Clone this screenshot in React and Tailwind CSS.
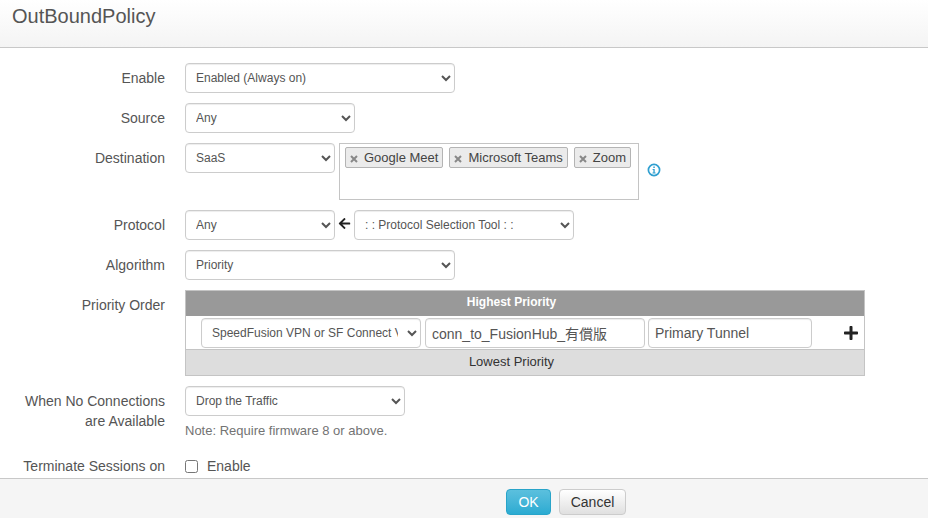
import React from "react";
import { FaPlus, FaArrowLeft } from "react-icons/fa";

const selectCls =
  "h-[30px] shrink-0 rounded-[4px] border border-[#cccccc] bg-white pl-[6px] pr-[6px] text-[12px] text-[#555555] shadow-[inset_0_1px_1px_rgba(0,0,0,0.075)] outline-none";
const inputCls =
  "h-[30px] shrink-0 rounded-[4px] border border-[#cccccc] bg-white px-[6px] text-[14px] text-[#555555] shadow-[inset_0_1px_1px_rgba(0,0,0,0.075)] outline-none";

function Select({ className, children }) {
  return (
    <select className={`${selectCls} ${className}`}>
      <option>{children}</option>
    </select>
  );
}

function Row({ label, className = "", labelClass = "", children }) {
  return (
    <div className={`flex gap-5 ${className}`}>
      <div className={`w-[165px] shrink-0 text-right text-[14px] leading-[20px] text-[#555555] ${labelClass}`}>
        {label}
      </div>
      {children}
    </div>
  );
}

function Tag({ children }) {
  return (
    <span className="flex h-[21px] shrink-0 items-center gap-[6px] whitespace-nowrap rounded-[2px] border border-[#b4b4b4] bg-[#ebebeb] pl-[4px] pr-[4px] text-[13px] leading-[19px] text-[#444444]">
      <svg width="8" height="8" viewBox="0 0 8 8" className="mt-[2px]">
        <path d="M1 1 L7 7 M7 1 L1 7" stroke="#888888" strokeWidth="2" />
      </svg>
      {children}
    </span>
  );
}

export default function App() {
  return (
    <div className="flex h-[518px] w-[928px] flex-col overflow-hidden bg-white font-['Liberation_Sans','Noto_Sans_CJK_TC',sans-serif] text-[#555555]">
      <header className="h-[48px] shrink-0 border-b border-[#c8c8c8] bg-gradient-to-b from-white to-[#f4f4f4] pl-3 pt-[3px] text-[20px] leading-[26px] text-[#555555]">
        OutBoundPolicy
      </header>

      <main className="min-h-0 flex-1 overflow-hidden pt-[15px]">
        <Row label="Enable" labelClass="pt-[5px]" className="mb-[10px]">
          <Select className="w-[270px]">Enabled (Always on)</Select>
        </Row>
        <Row label="Source" labelClass="pt-[5px]" className="mb-[10px]">
          <Select className="w-[170px]">Any</Select>
        </Row>
        <Row label="Destination" labelClass="pt-[5px]" className="mb-[10px]">
          <div className="flex">
            <Select className="w-[150px]">SaaS</Select>
            <div className="ml-[4px] flex h-[57px] w-[300px] items-start gap-[6px] border border-[#c4c4c4] bg-white pl-[5px] pt-[3px]">
              <Tag>Google Meet</Tag>
              <Tag>Microsoft Teams</Tag>
              <Tag>Zoom</Tag>
            </div>
            <svg width="14" height="14" viewBox="0 0 14 14" className="ml-[8px] mt-[20px]">
              <circle cx="7" cy="7" r="5.6" fill="none" stroke="#2f9fd0" strokeWidth="1.7" />
              <path d="M5.6 5.9 H7.7 V9.4 H8.6 V10.4 H5.5 V9.4 H6.4 V6.9 H5.6 Z" fill="#2f9fd0" />
              <rect x="6.3" y="3.5" width="1.5" height="1.5" fill="#2f9fd0" />
            </svg>
          </div>
        </Row>
        <Row label="Protocol" labelClass="pt-[5px]" className="mb-[10px]">
          <div className="flex">
            <Select className="w-[150px]">Any</Select>
            <span className="flex w-[19px] justify-center pt-[7px] text-[#222222]">
              <FaArrowLeft size={13} />
            </span>
            <Select className="w-[220px]">: : Protocol Selection Tool : :</Select>
          </div>
        </Row>
        <Row label="Algorithm" labelClass="pt-[5px]" className="mb-[10px]">
          <Select className="w-[270px]">Priority</Select>
        </Row>
        <Row label="Priority Order" labelClass="pt-[5px]" className="mb-[10px]">
          <div className="w-[680px] border border-[#c4c4c4]">
            <div className="h-[25px] bg-[#999999] pr-[27px] text-center text-[12px] font-bold leading-[22px] text-white">
              Highest Priority
            </div>
            <div className="flex h-[34px] items-center border-b border-[#c4c4c4] pl-[15px]">
              <Select className="w-[220px]">SpeedFusion VPN or SF Connect VPN</Select>
              <input readOnly value="conn_to_FusionHub_有償版" className={`${inputCls} ml-[4px] w-[220px]`} />
              <input readOnly value="Primary Tunnel" className={`${inputCls} ml-[3px] w-[164px]`} />
              <span className="ml-[31px] text-[#222222]">
                <FaPlus size={16} />
              </span>
            </div>
            <div className="h-[25px] bg-[#dddddd] pr-[27px] text-center text-[13px] leading-[24px] text-[#333333]">
              Lowest Priority
            </div>
          </div>
        </Row>
        <Row
          label={
            <>
              When No Connections
              <br />
              are Available
            </>
          }
          labelClass="pt-[5px]"
          className="mb-[17px]"
        >
          <div>
            <Select className="block w-[220px]">Drop the Traffic</Select>
            <p className="mt-[6px] text-[13px] leading-[17px] text-[#737373]">Note: Require firmware 8 or above.</p>
          </div>
        </Row>
        <Row label="Terminate Sessions on">
          <label className="flex items-center gap-[9px] text-[14px] leading-[20px]">
            <input type="checkbox" className="m-0 h-[13px] w-[13px]" />
            Enable
          </label>
        </Row>
      </main>

      <footer className="flex h-[40px] shrink-0 justify-center gap-2 border-t border-[#c8c8c8] bg-[#f5f5f5] pl-[204px] pt-[10px]">
        <button className="h-[26px] w-[45px] rounded-[4px] border border-[#28a4c9] bg-gradient-to-b from-[#5bc0de] to-[#2aabd2] text-[14px] text-white">
          OK
        </button>
        <button className="h-[26px] w-[67px] rounded-[4px] border border-[#cccccc] bg-gradient-to-b from-white to-[#e0e0e0] text-[14px] text-[#333333]">
          Cancel
        </button>
      </footer>
    </div>
  );
}
